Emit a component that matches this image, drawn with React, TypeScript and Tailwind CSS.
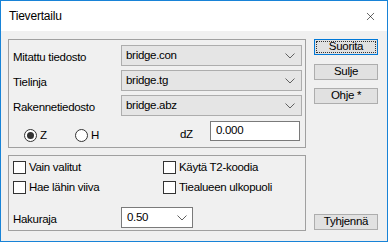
import { X } from 'lucide-react';

const font = { fontFamily: '"Liberation Sans", Arial, sans-serif' };

function Chevron() {
  return (
    <svg width="10" height="6" viewBox="0 0 10 6" className="text-[#606060]">
      <polyline points="0.5,0.5 5,5 9.5,0.5" fill="none" stroke="currentColor" strokeWidth="1" />
    </svg>
  );
}

function Combo({ value }: { value: string }) {
  return (
    <div className="flex h-[21px] w-[181px] items-center justify-between border border-[#adadad] bg-[#e5e5e5] pl-[4px] pr-[6px]">
      <span>{value}</span>
      <Chevron />
    </div>
  );
}

function Radio({ label, checked }: { label: string; checked?: boolean }) {
  return (
    <div className="flex items-center gap-[3px]">
      <span className="flex h-[13px] w-[13px] items-center justify-center rounded-full border border-[#333] bg-white">
        {checked && <span className="h-[7px] w-[7px] rounded-full bg-[#333]" />}
      </span>
      <span>{label}</span>
    </div>
  );
}

function Check({ label }: { label: string }) {
  return (
    <div className="flex items-center gap-[3px]">
      <span className="h-[13px] w-[13px] border border-[#333] bg-white" />
      <span>{label}</span>
    </div>
  );
}

function Button({ label, focused }: { label: string; focused?: boolean }) {
  return (
    <div
      className={`flex h-[16px] w-[64px] items-center justify-center border ${
        focused ? 'border-[#0078d7] outline-1 outline-dotted outline-[#333] -outline-offset-3' : 'border-[#adadad]'
      } bg-[#e1e1e1]`}
    >
      {label}
    </div>
  );
}

export default function App() {
  return (
    <div
      className="flex h-[242px] w-[388px] flex-col border border-[#1883d7] bg-[#f0f0f0] text-[11.5px] leading-none tracking-[-0.3px] text-black"
      style={font}
    >
      <div className="flex h-[30px] items-center justify-between bg-white pl-[8px] pr-[10px]">
        <span className="text-[12px] tracking-[-0.2px]">Tievertailu</span>
        <X size={13} strokeWidth={1.1} />
      </div>

      <div className="flex flex-1 gap-[8px] pl-[7px] pt-[8px]">
        <div className="flex flex-col gap-[7px]">
          <div className="flex h-[109px] w-[298px] flex-col gap-[4px] border border-[#a0a0a0] pl-[4px] pt-[5px]">
            {[
              ['Mitattu tiedosto', 'bridge.con'],
              ['Tielinja', 'bridge.tg'],
              ['Rakennetiedosto', 'bridge.abz'],
            ].map(([label, value]) => (
              <div key={label} className="flex h-[21px] items-center">
                <span className="w-[108px] pt-[5px]">{label}</span>
                <Combo value={value} />
              </div>
            ))}
            <div className="mt-[1px] flex h-[20px] items-center">
              <div className="ml-[11px] mt-[9px] w-[51px]">
                <Radio label="Z" checked />
              </div>
              <div className="mt-[9px] w-[105px]">
                <Radio label="H" />
              </div>
              <span className="w-[30px] pt-[8px]">dZ</span>
              <div className="flex h-[20px] w-[90px] items-center border border-[#7a7a7a] bg-white pl-[5px]">
                0.000
              </div>
            </div>
          </div>

          <div className="flex h-[76px] w-[298px] flex-col border border-[#a0a0a0] pl-[4px] pt-[5px]">
            <div className="flex h-[13px]">
              <div className="w-[150px]">
                <Check label="Vain valitut" />
              </div>
              <Check label="Käytä T2-koodia" />
            </div>
            <div className="mt-[7px] flex h-[13px]">
              <div className="w-[150px]">
                <Check label="Hae lähin viiva" />
              </div>
              <Check label="Tiealueen ulkopuoli" />
            </div>
            <div className="mt-[13px] flex h-[21px] items-center">
              <span className="w-[108px] pt-[5px]">Hakuraja</span>
              <div className="flex h-[21px] w-[72px] items-center justify-between border border-[#7a7a7a] bg-white pl-[5px] pr-[5px]">
                <span>0.50</span>
                <Chevron />
              </div>
            </div>
          </div>
        </div>

        <div className="flex flex-col">
          <Button label="Suorita" focused />
          <div className="mt-[9px]">
            <Button label="Sulje" />
          </div>
          <div className="mt-[8px]">
            <Button label="Ohje *" />
          </div>
          <div className="mt-auto mb-[11px]">
            <Button label="Tyhjennä" />
          </div>
        </div>
      </div>
    </div>
  );
}
